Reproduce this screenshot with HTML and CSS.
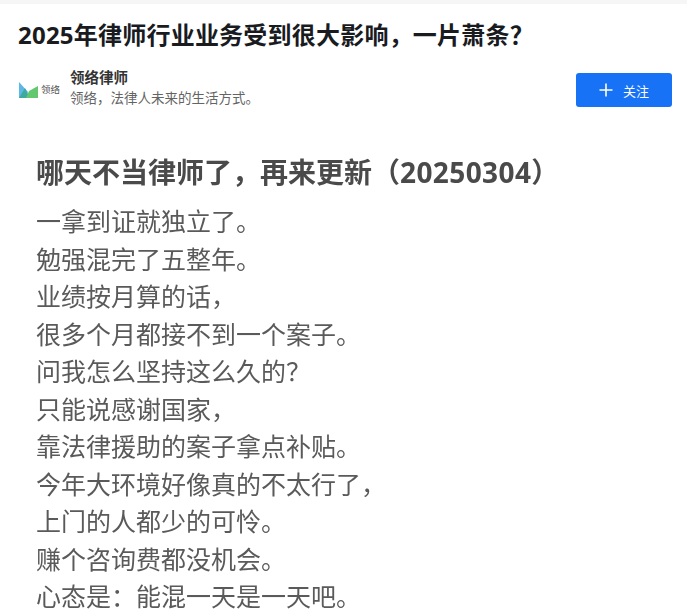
FILE: index.html
```html
<!DOCTYPE html>
<html lang="zh">
<head>
<meta charset="utf-8">
<title>2025年律师行业业务受到很大影响，一片萧条？</title>
<link rel="stylesheet" href="styles.css">
</head>
<body>
<div class="topstrip"></div>
<main class="page">
  <h1 class="title">2025年律师行业业务受到很大影响，一片萧条？</h1>
  <div class="author">
    <div class="logo">
      <svg class="mark" width="20" height="16" viewBox="0 0 20 16">
        <path d="M0 0 L9 10 L6 16 L0 16 Z" fill="#5cb8e6"/>
        <path d="M0 16 L6 6 L11 16 Z" fill="#3fa9a0"/>
        <path d="M7 16 L10 9 L19 4 L19 16 Z" fill="#62c76f"/>
      </svg>
      <span class="logotext">领络</span>
    </div>
    <div class="meta">
      <div class="name">领络律师</div>
      <div class="bio">领络，法律人未来的生活方式。</div>
    </div>
    <button class="follow">
      <svg width="14" height="14" viewBox="0 0 14 14"><path d="M7 0.5V13.5M0.5 7H13.5" stroke="#fff" stroke-width="1.6" fill="none"/></svg>
      <span>关注</span>
    </button>
  </div>
  <article class="article">
    <h2 class="heading">哪天不当律师了，再来更新（<span class="digits">20250304</span>）</h2>
    <p class="lines">一拿到证就独立了。<br>勉强混完了五整年。<br>业绩按月算的话，<br>很多个月都接不到一个案子。<br>问我怎么坚持这么久的？<br>只能说感谢国家，<br>靠法律援助的案子拿点补贴。<br>今年大环境好像真的不太行了，<br>上门的人都少的可怜。<br>赚个咨询费都没机会。<br>心态是：能混一天是一天吧。</p>
  </article>
</main>
</body>
</html>
```

FILE: styles.css
```css
html, body { margin: 0; padding: 0; height: 609px; overflow: hidden; background: #fff; }
body { font-family: "Noto Sans", "Noto Sans CJK SC", sans-serif; }
.topstrip { height: 4px; background: #f6f6f6; }
.page { padding: 0 15px 0 18px; }
.title { margin: 0; padding-top: 14px; font-size: 24px; line-height: 34px; font-weight: 700; color: #191b1f; letter-spacing: 0.22px; white-space: nowrap; }
.author { display: flex; align-items: center; margin-top: 15px; height: 42px; }
.logo { display: flex; align-items: center; gap: 2px; width: 52px; padding-top: 3px; }
.mark { flex: none; margin-left: 1px; }
.logotext { font-size: 9.5px; line-height: 12px; color: #555; white-space: nowrap; }
.meta { flex: 1; }
.name { font-size: 14.5px; line-height: 18px; font-weight: 700; color: #333; }
.bio { font-size: 13.5px; line-height: 19px; color: #646464; margin-top: 3px; }
.follow { display: flex; align-items: center; justify-content: center; gap: 10px; width: 96px; height: 34px; margin-top: 4px; border: 0; border-radius: 3px; background: #1772f6; color: #fff; font-family: inherit; font-size: 13px; padding: 0; }
.article { padding: 0 0 0 18px; margin-top: 43px; color: #555; filter: blur(0.35px); }
.heading { margin: 0; font-size: 28px; line-height: 40px; font-weight: 700; color: #4a4a4a; white-space: nowrap; }
.digits { letter-spacing: 0.4px; }
.lines { margin: 11px 0 0; font-size: 25px; line-height: 37.5px; color: #5a5a5a; white-space: nowrap; }
```
